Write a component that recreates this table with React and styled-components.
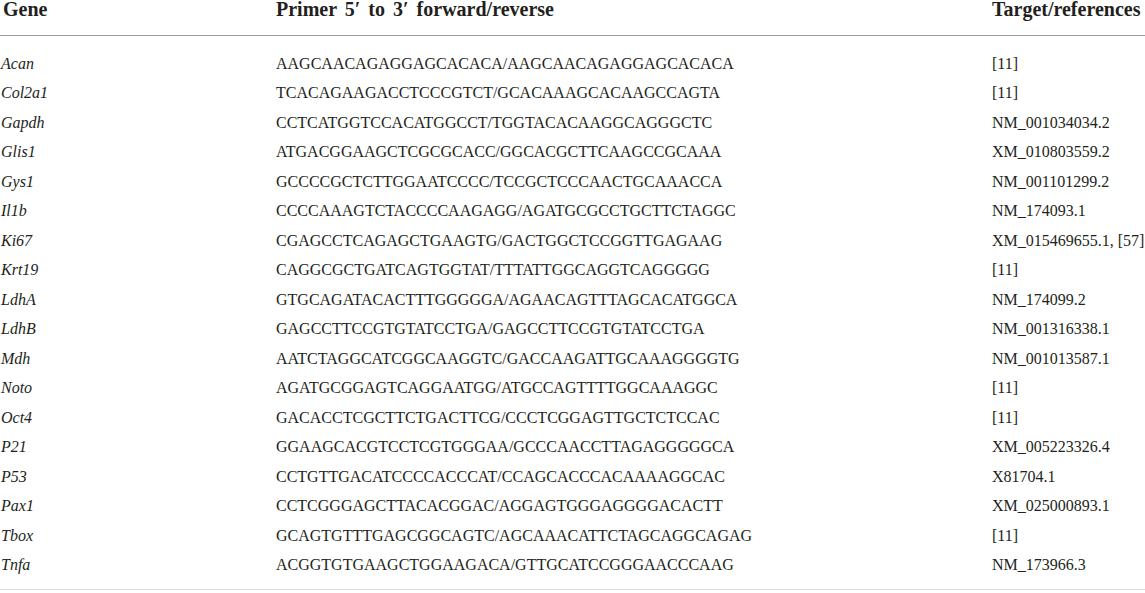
import styled, { createGlobalStyle } from "styled-components";

const GlobalStyle = createGlobalStyle`
  html, body {
    margin: 0;
    padding: 0;
    background: #fff;
  }
  body {
    font-family: "Liberation Serif", "Times New Roman", serif;
    color: #231f20;
  }
`;

const Table = styled.div`
  width: 1145px;
  border-bottom: 1px solid #dcdcdc;
  padding-bottom: 9px;
`;

const Row = styled.div`
  display: grid;
  grid-template-columns: 276px 716px 1fr;
  align-items: center;
  height: ${(p) => (p.$head ? "35px" : "29.5px")};
  ${(p) =>
    p.$head &&
    `
    align-items: start;
    border-bottom: 1px solid #9d9d9d;
    margin-bottom: 13px;
  `}
`;

const HeadCell = styled.div`
  font-weight: bold;
  font-size: 20px;
  line-height: 18px;
  white-space: nowrap;
  word-spacing: ${(p) => (p.$wide ? "3px" : "0")};
  padding-left: ${(p) => (p.$first ? "3px" : "0")};
`;

const Cell = styled.div`
  font-size: 16px;
  line-height: 20px;
  white-space: nowrap;
  font-style: ${(p) => (p.$italic ? "italic" : "normal")};
  padding-left: ${(p) => (p.$first ? "1px" : "0")};
`;

const rows = [
  ["Acan", "AAGCAACAGAGGAGCACACA/AAGCAACAGAGGAGCACACA", "[11]"],
  ["Col2a1", "TCACAGAAGACCTCCCGTCT/GCACAAAGCACAAGCCAGTA", "[11]"],
  ["Gapdh", "CCTCATGGTCCACATGGCCT/TGGTACACAAGGCAGGGCTC", "NM_001034034.2"],
  ["Glis1", "ATGACGGAAGCTCGCGCACC/GGCACGCTTCAAGCCGCAAA", "XM_010803559.2"],
  ["Gys1", "GCCCCGCTCTTGGAATCCCC/TCCGCTCCCAACTGCAAACCA", "NM_001101299.2"],
  ["Il1b", "CCCCAAAGTCTACCCCAAGAGG/AGATGCGCCTGCTTCTAGGC", "NM_174093.1"],
  ["Ki67", "CGAGCCTCAGAGCTGAAGTG/GACTGGCTCCGGTTGAGAAG", "XM_015469655.1, [57]"],
  ["Krt19", "CAGGCGCTGATCAGTGGTAT/TTTATTGGCAGGTCAGGGGG", "[11]"],
  ["LdhA", "GTGCAGATACACTTTGGGGGA/AGAACAGTTTAGCACATGGCA", "NM_174099.2"],
  ["LdhB", "GAGCCTTCCGTGTATCCTGA/GAGCCTTCCGTGTATCCTGA", "NM_001316338.1"],
  ["Mdh", "AATCTAGGCATCGGCAAGGTC/GACCAAGATTGCAAAGGGGTG", "NM_001013587.1"],
  ["Noto", "AGATGCGGAGTCAGGAATGG/ATGCCAGTTTTGGCAAAGGC", "[11]"],
  ["Oct4", "GACACCTCGCTTCTGACTTCG/CCCTCGGAGTTGCTCTCCAC", "[11]"],
  ["P21", "GGAAGCACGTCCTCGTGGGAA/GCCCAACCTTAGAGGGGGCA", "XM_005223326.4"],
  ["P53", "CCTGTTGACATCCCCACCCAT/CCAGCACCCACAAAAGGCAC", "X81704.1"],
  ["Pax1", "CCTCGGGAGCTTACACGGAC/AGGAGTGGGAGGGGACACTT", "XM_025000893.1"],
  ["Tbox", "GCAGTGTTTGAGCGGCAGTC/AGCAAACATTCTAGCAGGCAGAG", "[11]"],
  ["Tnfa", "ACGGTGTGAAGCTGGAAGACA/GTTGCATCCGGGAACCCAAG", "NM_173966.3"],
];

export default function App() {
  return (
    <>
      <GlobalStyle />
      <Table>
        <Row $head>
          <HeadCell $first>Gene</HeadCell>
          <HeadCell $wide>Primer 5′ to 3′ forward/reverse</HeadCell>
          <HeadCell>Target/references</HeadCell>
        </Row>
        {rows.map(([gene, primer, target]) => (
          <Row key={gene}>
            <Cell $first $italic>
              {gene}
            </Cell>
            <Cell>{primer}</Cell>
            <Cell>{target}</Cell>
          </Row>
        ))}
      </Table>
    </>
  );
}
